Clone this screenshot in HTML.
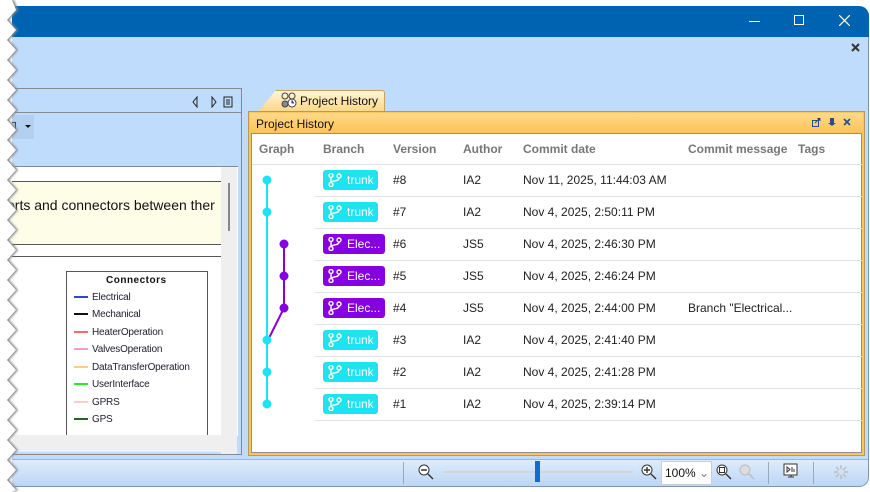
<!DOCTYPE html>
<html><head><meta charset="utf-8"><style>
*{margin:0;padding:0;box-sizing:border-box}
body{width:870px;height:492px;background:#fff;position:relative;overflow:hidden;font-family:"Liberation Sans",sans-serif;}
.a{position:absolute}
.t{font-size:12px;color:#222;white-space:nowrap}
.h{font-size:12px;color:#777;font-weight:bold;white-space:nowrap}
.b{position:absolute;left:323px;height:20px;border-radius:3px;color:#fff;font-size:12px;line-height:20px;padding-left:24px;}
.b svg{position:absolute;left:5px;top:3px}
.cy{background:#1ee3f0;width:55px}
.pu{background:#8700e0;width:62px}
.sep{position:absolute;left:315px;width:547px;height:1px;background:#e0e0e0}
.lg{position:absolute;left:74px;font-size:10px;color:#223;white-space:nowrap;letter-spacing:-0.2px}
.lg i{display:inline-block;width:14px;height:2px;margin-right:4px;vertical-align:middle}
</style></head><body>
<!-- window -->
<div class="a" style="left:12px;top:6px;width:857px;height:481px;background:#c0dcfc;border-radius:0 10px 10px 0;border-right:1px solid #7a95b5;border-bottom:1px solid #7a95b5"></div>
<div class="a" style="left:12px;top:6px;width:857px;height:31px;background:#0063b1;border-radius:0 10px 0 0"></div>
<!-- title buttons -->
<div class="a" style="left:749px;top:21px;width:11px;height:1px;background:#fff"></div>
<div class="a" style="left:794px;top:15px;width:10px;height:10px;border:1px solid #fff"></div>
<svg class="a" style="left:839px;top:15px" width="11" height="11"><path d="M0 0L11 11M11 0L0 11" stroke="#fff" stroke-width="1.2"/></svg>
<svg class="a" style="left:851px;top:43px" width="9" height="9"><path d="M1 1L8 8M8 1L1 8" stroke="#333" stroke-width="2"/></svg>

<!-- left panel -->
<div class="a" style="left:12px;top:88px;width:230px;height:367px;border:1px solid #8a8a8a;border-left:none;background:#c0dcfc"></div>
<div class="a" style="left:12px;top:112px;width:229px;height:1px;background:#8a8a8a"></div>
<svg class="a" style="left:192px;top:96px" width="42" height="12"><path d="M5 1L1 6L5 11Z" fill="none" stroke="#222"/><path d="M20 1L24 6L20 11Z" fill="none" stroke="#222"/><rect x="32" y="1" width="8" height="10" fill="none" stroke="#222"/><path d="M34 4h4M34 6h4M34 8h4" stroke="#222"/></svg>
<div class="a" style="left:12px;top:115px;width:22px;height:24px;background:#b3d0f0"></div>
<div class="a" style="left:12px;top:122px;width:4px;height:8px;border:1px solid #444;border-left:none"></div>
<svg class="a" style="left:25px;top:125px" width="6" height="4"><path d="M0 0h6L3 3z" fill="#111"/></svg>
<div class="a" style="left:12px;top:166px;width:226px;height:270px;background:#fff;border-top:1px solid #8a8a8a"></div>
<div class="a" style="left:221px;top:167px;width:16px;height:287px;background:#efefef"></div>
<div class="a" style="left:228px;top:183px;width:2px;height:48px;background:#888"></div>
<div class="a" style="left:12px;top:181px;width:209px;height:64px;background:#fdfde8;border-top:1px solid #555;border-bottom:1px solid #555"></div>
<div class="a t" style="left:7px;top:197px;font-size:14px;color:#111">orts and connectors between ther</div>
<div class="a" style="left:12px;top:256px;width:209px;height:1px;background:#555"></div>
<div class="a" style="left:66px;top:271px;width:142px;height:170px;border:1px solid #555;border-bottom:none;background:#fff"></div>
<div class="a" style="left:106px;top:275px;font-size:10px;font-weight:bold;color:#111;letter-spacing:0.5px">Connectors</div>
<div class="lg" style="top:292px"><i style="background:#3344dd"></i>Electrical</div>
<div class="lg" style="top:309px"><i style="background:#111"></i>Mechanical</div>
<div class="lg" style="top:327px"><i style="background:#ff6666"></i>HeaterOperation</div>
<div class="lg" style="top:344px"><i style="background:#ff99cc"></i>ValvesOperation</div>
<div class="lg" style="top:362px"><i style="background:#ffcc88"></i>DataTransferOperation</div>
<div class="lg" style="top:379px"><i style="background:#22ee22"></i>UserInterface</div>
<div class="lg" style="top:397px"><i style="background:#ffcccc"></i>GPRS</div>
<div class="lg" style="top:414px"><i style="background:#226622"></i>GPS</div>
<div class="a" style="left:12px;top:435px;width:209px;height:17px;background:#efefef"></div>

<!-- tab -->
<div class="a" style="left:258px;top:90px;width:127px;height:22px;background:linear-gradient(#fff4d8,#fcd684);border:1px solid #c9a458;border-bottom:none;clip-path:polygon(18px 0,100% 0,100% 100%,0 100%);border-radius:0 3px 0 0"></div>
<svg class="a" style="left:280px;top:92px" width="18" height="16"><circle cx="5" cy="4" r="3" fill="none" stroke="#444"/><circle cx="12" cy="4" r="3" fill="none" stroke="#444"/><circle cx="5" cy="12" r="3" fill="#889" stroke="#444"/><circle cx="12" cy="11" r="4" fill="#fff" stroke="#444"/><path d="M12 8v3h2" stroke="#2255aa"/></svg>
<div class="a t" style="left:300px;top:94px;font-size:12px;color:#111">Project History</div>

<!-- right panel -->
<div class="a" style="left:248px;top:111px;width:617px;height:345px;background:#f9c65e;border:1px solid #b79a5a"></div>
<div class="a" style="left:250px;top:113px;width:613px;height:20px;background:linear-gradient(#ffd98a,#fbc457)"></div>
<div class="a t" style="left:256px;top:117px;color:#111">Project History</div>
<svg class="a" style="left:812px;top:118px" width="44" height="10"><rect x="0.5" y="2.5" width="6" height="6" fill="none" stroke="#2a4d8a"/><path d="M3 5l5-5M5 0h3v3" stroke="#2a4d8a"/><path d="M18 0h4v5h2l-4 3-4-3h2z" fill="#2a4d8a"/><path d="M32 1l6 6M38 1l-6 6" stroke="#2a4d8a" stroke-width="1.6"/></svg>
<div class="a" style="left:251px;top:133px;width:611px;height:320px;background:#fff;border:1px solid #8f8f8f"></div>

<div class="a h" style="left:259px;top:142px">Graph</div>
<div class="a h" style="left:323px;top:142px">Branch</div>
<div class="a h" style="left:393px;top:142px">Version</div>
<div class="a h" style="left:463px;top:142px">Author</div>
<div class="a h" style="left:523px;top:142px">Commit date</div>
<div class="a h" style="left:688px;top:142px">Commit message</div>
<div class="a h" style="left:798px;top:142px">Tags</div>
<div class="a" style="left:252px;top:164px;width:610px;height:1px;background:#e0e0e0"></div>
<div class="sep" style="top:196px"></div><div class="sep" style="top:228px"></div><div class="sep" style="top:260px"></div><div class="sep" style="top:292px"></div><div class="sep" style="top:324px"></div><div class="sep" style="top:356px"></div><div class="sep" style="top:388px"></div><div class="sep" style="top:420px"></div>

<svg class="a" style="left:252px;top:170px" width="50" height="245">
<path d="M15 10V234" stroke="#1ee3f0" stroke-width="2"/>
<path d="M32 74V138L17 168" stroke="#8700e0" stroke-width="2" fill="none"/>
<g fill="#1ee3f0"><circle cx="15" cy="10" r="4.5"/><circle cx="15" cy="42" r="4.5"/><circle cx="15" cy="170" r="4.5"/><circle cx="15" cy="202" r="4.5"/><circle cx="15" cy="234" r="4.5"/></g>
<g fill="#8700e0"><circle cx="32" cy="74" r="4.5"/><circle cx="32" cy="106" r="4.5"/><circle cx="32" cy="138" r="4.5"/></g>
</svg>

<div id="rows"></div>
<script></script>
<!-- rows -->
<div class="b cy" style="top:170px"><svg width="14" height="14"><circle cx="3" cy="2.5" r="2" fill="none" stroke="#fff" stroke-width="1.4"/><circle cx="3" cy="11.5" r="2" fill="none" stroke="#fff" stroke-width="1.4"/><circle cx="11" cy="3" r="2" fill="none" stroke="#fff" stroke-width="1.4"/><path d="M3 4.5v5M11 5c0 4-8 2-8 5" fill="none" stroke="#fff" stroke-width="1.4"/></svg>trunk</div>
<div class="b cy" style="top:202px"><svg width="14" height="14"><circle cx="3" cy="2.5" r="2" fill="none" stroke="#fff" stroke-width="1.4"/><circle cx="3" cy="11.5" r="2" fill="none" stroke="#fff" stroke-width="1.4"/><circle cx="11" cy="3" r="2" fill="none" stroke="#fff" stroke-width="1.4"/><path d="M3 4.5v5M11 5c0 4-8 2-8 5" fill="none" stroke="#fff" stroke-width="1.4"/></svg>trunk</div>
<div class="b pu" style="top:234px"><svg width="14" height="14"><circle cx="3" cy="2.5" r="2" fill="none" stroke="#fff" stroke-width="1.4"/><circle cx="3" cy="11.5" r="2" fill="none" stroke="#fff" stroke-width="1.4"/><circle cx="11" cy="3" r="2" fill="none" stroke="#fff" stroke-width="1.4"/><path d="M3 4.5v5M11 5c0 4-8 2-8 5" fill="none" stroke="#fff" stroke-width="1.4"/></svg>Elec...</div>
<div class="b pu" style="top:266px"><svg width="14" height="14"><circle cx="3" cy="2.5" r="2" fill="none" stroke="#fff" stroke-width="1.4"/><circle cx="3" cy="11.5" r="2" fill="none" stroke="#fff" stroke-width="1.4"/><circle cx="11" cy="3" r="2" fill="none" stroke="#fff" stroke-width="1.4"/><path d="M3 4.5v5M11 5c0 4-8 2-8 5" fill="none" stroke="#fff" stroke-width="1.4"/></svg>Elec...</div>
<div class="b pu" style="top:298px"><svg width="14" height="14"><circle cx="3" cy="2.5" r="2" fill="none" stroke="#fff" stroke-width="1.4"/><circle cx="3" cy="11.5" r="2" fill="none" stroke="#fff" stroke-width="1.4"/><circle cx="11" cy="3" r="2" fill="none" stroke="#fff" stroke-width="1.4"/><path d="M3 4.5v5M11 5c0 4-8 2-8 5" fill="none" stroke="#fff" stroke-width="1.4"/></svg>Elec...</div>
<div class="b cy" style="top:330px"><svg width="14" height="14"><circle cx="3" cy="2.5" r="2" fill="none" stroke="#fff" stroke-width="1.4"/><circle cx="3" cy="11.5" r="2" fill="none" stroke="#fff" stroke-width="1.4"/><circle cx="11" cy="3" r="2" fill="none" stroke="#fff" stroke-width="1.4"/><path d="M3 4.5v5M11 5c0 4-8 2-8 5" fill="none" stroke="#fff" stroke-width="1.4"/></svg>trunk</div>
<div class="b cy" style="top:362px"><svg width="14" height="14"><circle cx="3" cy="2.5" r="2" fill="none" stroke="#fff" stroke-width="1.4"/><circle cx="3" cy="11.5" r="2" fill="none" stroke="#fff" stroke-width="1.4"/><circle cx="11" cy="3" r="2" fill="none" stroke="#fff" stroke-width="1.4"/><path d="M3 4.5v5M11 5c0 4-8 2-8 5" fill="none" stroke="#fff" stroke-width="1.4"/></svg>trunk</div>
<div class="b cy" style="top:394px"><svg width="14" height="14"><circle cx="3" cy="2.5" r="2" fill="none" stroke="#fff" stroke-width="1.4"/><circle cx="3" cy="11.5" r="2" fill="none" stroke="#fff" stroke-width="1.4"/><circle cx="11" cy="3" r="2" fill="none" stroke="#fff" stroke-width="1.4"/><path d="M3 4.5v5M11 5c0 4-8 2-8 5" fill="none" stroke="#fff" stroke-width="1.4"/></svg>trunk</div>

<div class="a t" style="left:393px;top:173px">#8</div><div class="a t" style="left:463px;top:173px">IA2</div><div class="a t" style="left:523px;top:173px">Nov 11, 2025, 11:44:03 AM</div>
<div class="a t" style="left:393px;top:205px">#7</div><div class="a t" style="left:463px;top:205px">IA2</div><div class="a t" style="left:523px;top:205px">Nov 4, 2025, 2:50:11 PM</div>
<div class="a t" style="left:393px;top:237px">#6</div><div class="a t" style="left:463px;top:237px">JS5</div><div class="a t" style="left:523px;top:237px">Nov 4, 2025, 2:46:30 PM</div>
<div class="a t" style="left:393px;top:269px">#5</div><div class="a t" style="left:463px;top:269px">JS5</div><div class="a t" style="left:523px;top:269px">Nov 4, 2025, 2:46:24 PM</div>
<div class="a t" style="left:393px;top:301px">#4</div><div class="a t" style="left:463px;top:301px">JS5</div><div class="a t" style="left:523px;top:301px">Nov 4, 2025, 2:44:00 PM</div><div class="a t" style="left:688px;top:301px">Branch "Electrical...</div>
<div class="a t" style="left:393px;top:333px">#3</div><div class="a t" style="left:463px;top:333px">IA2</div><div class="a t" style="left:523px;top:333px">Nov 4, 2025, 2:41:40 PM</div>
<div class="a t" style="left:393px;top:365px">#2</div><div class="a t" style="left:463px;top:365px">IA2</div><div class="a t" style="left:523px;top:365px">Nov 4, 2025, 2:41:28 PM</div>
<div class="a t" style="left:393px;top:397px">#1</div><div class="a t" style="left:463px;top:397px">IA2</div><div class="a t" style="left:523px;top:397px">Nov 4, 2025, 2:39:14 PM</div>

<!-- status bar -->
<div class="a" style="left:12px;top:459px;width:856px;height:27px;background:linear-gradient(#dfecfc,#bcd6f4);border-top:1px solid #9ab6d8;border-radius:0 0 9px 0"></div>
<div class="a" style="left:403px;top:462px;width:1px;height:22px;background:#9ab"></div>
<div class="a" style="left:768px;top:462px;width:1px;height:22px;background:#9ab"></div>
<div class="a" style="left:813px;top:462px;width:1px;height:22px;background:#9ab"></div>
<svg class="a" style="left:418px;top:464px" width="16" height="16"><circle cx="6" cy="6" r="5" fill="#fff" stroke="#333"/><path d="M3 6h6M10 10l5 5" stroke="#333" stroke-width="1.4"/></svg>
<div class="a" style="left:443px;top:471px;width:190px;height:2px;background:#d4d4d4"></div>
<div class="a" style="left:535px;top:461px;width:5px;height:21px;background:#0a6fd0"></div>
<svg class="a" style="left:641px;top:464px" width="16" height="16"><circle cx="6" cy="6" r="5" fill="#fff" stroke="#333"/><path d="M3 6h6M6 3v6M10 10l5 5" stroke="#333" stroke-width="1.4"/></svg>
<div class="a" style="left:661px;top:461px;width:51px;height:24px;background:#fff;border:1px solid #ccc;font-size:12px;padding:4px 0 0 3px;color:#111">100% <span style="color:#777">&#8964;</span></div>
<svg class="a" style="left:716px;top:464px" width="16" height="16"><circle cx="6" cy="6" r="5" fill="#fff" stroke="#333"/><rect x="3.5" y="3.5" width="5" height="5" fill="none" stroke="#333"/><path d="M10 10l5 5" stroke="#333" stroke-width="1.4"/></svg>
<svg class="a" style="left:739px;top:464px" width="16" height="16"><circle cx="6" cy="6" r="5" fill="#ddd" stroke="#bbb"/><path d="M10 10l5 5" stroke="#bbb" stroke-width="1.4"/></svg>
<svg class="a" style="left:783px;top:463px" width="16" height="17"><rect x="1" y="1" width="13" height="11" fill="#fff" stroke="#333"/><path d="M4 4v5l3-2.5zM9 4v5M11 6v3M5 14h6M8 12v2" stroke="#333" fill="none"/></svg>
<svg class="a" style="left:834px;top:465px" width="14" height="14" stroke="#bbb" stroke-width="1.4"><path d="M7 0v4M7 10v4M0 7h4M10 7h4M2 2l3 3M9 9l3 3M12 2l-3 3M5 9l-3 3"/></svg>

<!-- zigzag left edge -->
<svg class="a" style="left:0;top:0" width="22" height="492">
<defs><filter id="s"><feGaussianBlur stdDeviation="1"/></filter></defs>
<path filter="url(#s)" fill="#888" d="M0 0H14 L18 10 L9 20 L18 30 L9 40 L18 50 L9 60 L18 70 L9 80 L18 90 L9 100 L18 110 L9 120 L18 130 L9 140 L18 150 L9 160 L18 170 L9 180 L18 190 L9 200 L18 210 L9 220 L18 230 L9 240 L18 250 L9 260 L18 270 L9 280 L18 290 L9 300 L18 310 L9 320 L18 330 L9 340 L18 350 L9 360 L18 370 L9 380 L18 390 L9 400 L18 410 L9 420 L18 430 L9 440 L18 450 L9 460 L18 470 L9 480 L18 490 L14 492 H0Z"/>
<path fill="#fff" d="M0 0H12 L16 10 L7 20 L16 30 L7 40 L16 50 L7 60 L16 70 L7 80 L16 90 L7 100 L16 110 L7 120 L16 130 L7 140 L16 150 L7 160 L16 170 L7 180 L16 190 L7 200 L16 210 L7 220 L16 230 L7 240 L16 250 L7 260 L16 270 L7 280 L16 290 L7 300 L16 310 L7 320 L16 330 L7 340 L16 350 L7 360 L16 370 L7 380 L16 390 L7 400 L16 410 L7 420 L16 430 L7 440 L16 450 L7 460 L16 470 L7 480 L16 490 L12 492 H0Z"/>
</svg>
</body></html>
